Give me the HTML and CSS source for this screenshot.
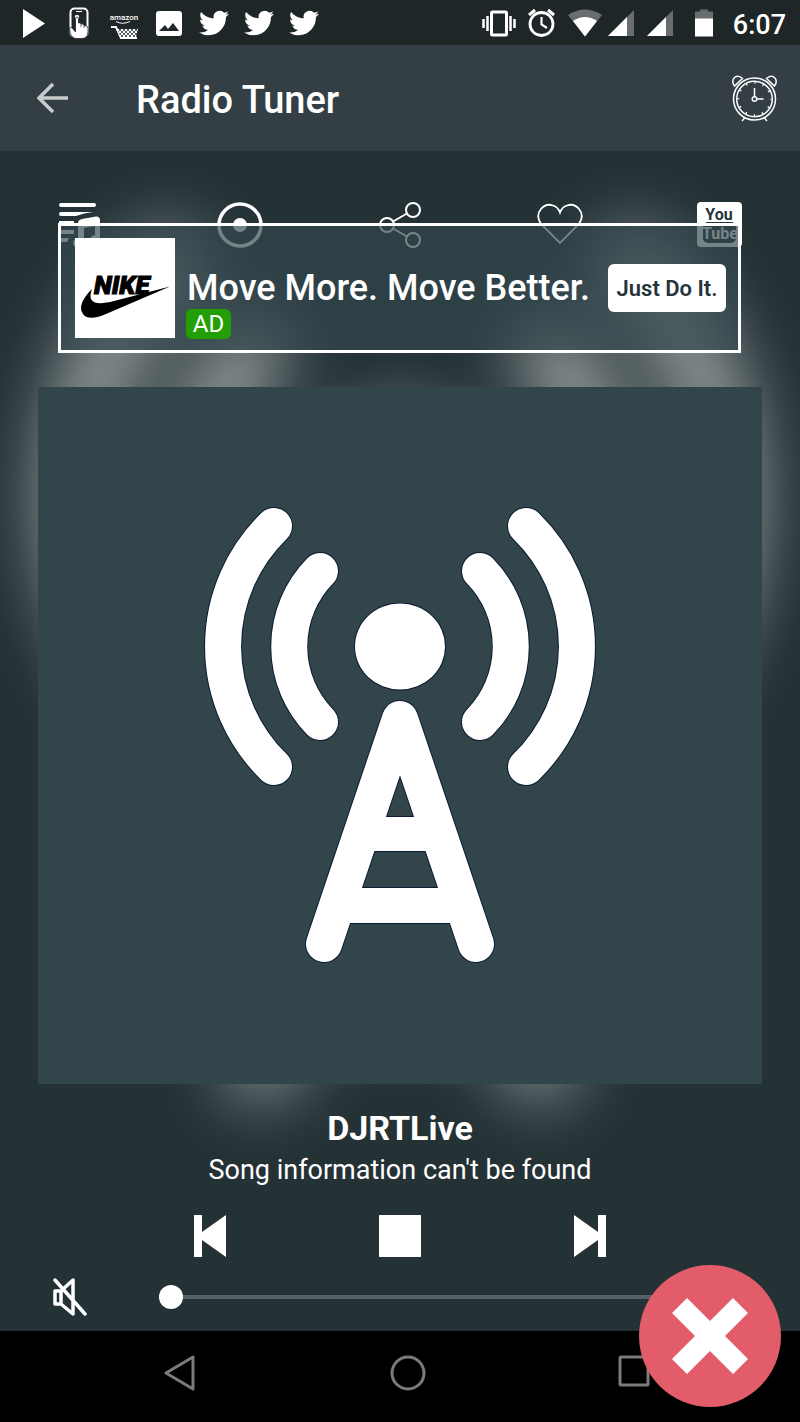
FILE: index.html
```html
<!DOCTYPE html>
<html lang="en">
<head>
<meta charset="utf-8">
<meta name="viewport" content="width=device-width, initial-scale=1">
<title>Radio Tuner</title>
<link rel="stylesheet" href="styles.css">
</head>
<body>
<svg class="defs" aria-hidden="true">
  <defs>
    <g id="waves">
      <path d="M236 139A168 168 0 0 0 236 380M282 184A108 108 0 0 0 282 335M488 139A168 168 0 0 1 488 380M442 184A108 108 0 0 1 442 335"/>
      <path d="M286 557L362 332L438 557"/>
    </g>
    <g id="mast">
      <ellipse cx="362" cy="259.500" rx="45" ry="43"/>
      <path d="M331 430H393L405 464H319ZM308 501H416L428 536H296Z"/>
    </g>
    <path id="bird" d="M23.953 4.57a10 10 0 01-2.825.775 4.958 4.958 0 002.163-2.723c-.951.555-2.005.959-3.127 1.184a4.92 4.92 0 00-8.384 4.482C7.69 8.095 4.067 6.13 1.64 3.162a4.822 4.822 0 00-.666 2.475c0 1.71.87 3.213 2.188 4.096a4.904 4.904 0 01-2.228-.616v.06a4.923 4.923 0 003.946 4.827 4.996 4.996 0 01-2.212.085 4.936 4.936 0 004.604 3.417 9.867 9.867 0 01-6.102 2.105c-.39 0-.779-.023-1.17-.067a13.995 13.995 0 007.557 2.209c9.053 0 13.998-7.496 13.998-13.985 0-.21 0-.42-.015-.63A9.935 9.935 0 0024 4.59z"/>
    <pattern id="mesh" width="4" height="4" patternUnits="userSpaceOnUse">
      <rect width="4" height="4" fill="#fff"/><circle cx="1" cy="1" r="1" fill="#1f2628"/><circle cx="3" cy="3" r="1" fill="#1f2628"/>
    </pattern>
  </defs>
</svg>

<div class="phone">
  <div class="app">
    <div class="backdrop" aria-hidden="true">
      <svg class="glow" viewBox="0 0 724 697" preserveAspectRatio="none">
        <use href="#waves" class="wave-fill"/><use href="#mast" class="mast-fill"/>
      </svg>
    </div>

    <div class="status">
      <div class="status-left">
        <svg viewBox="0 0 30 32"><path d="M4 2V31L26 16.500Z"/></svg>
        <svg viewBox="0 0 30 32"><rect x="6.500" y="1.500" width="17" height="28" rx="4" fill="none" stroke="#fff" stroke-width="2"/><path d="M12 4.500H18" stroke="#fff"/><circle cx="13" cy="10" r="2.200"/><path d="M11.500 12Q11.500 10 13 10T14.500 12V16Q16.500 15 17 17Q19.500 16 20 18.500Q23.500 18 24 21V25Q23.500 31.500 18 31.500H12Q6 31 5.500 21Q8 19.500 9 22L11.500 25Z" stroke="#1f2628" stroke-width=".8"/><path d="M17 17V20M20 18.500V21" stroke="#1f2628" stroke-width=".7"/></svg>
        <svg viewBox="0 0 30 32"><text x="15" y="13" class="amazon">amazon</text><path d="M7 14.500Q13 18 21 14.500" fill="none" stroke="#fff"/><path d="M2 20H7L12 31H28" fill="none" stroke="#fff" stroke-width="2"/><path d="M8 22H29L27 30H12Z" fill="url(#mesh)"/></svg>
        <svg viewBox="0 0 30 32"><path fill-rule="evenodd" d="M5 4H25Q28 4 28 7V26Q28 29 25 29H5Q2 29 2 26V7Q2 4 5 4ZM5 24H25L19 16L14 22L11 18Z"/></svg>
        <svg viewBox="0 0 24 24"><use href="#bird"/></svg>
        <svg viewBox="0 0 24 24"><use href="#bird"/></svg>
        <svg viewBox="0 0 24 24"><use href="#bird"/></svg>
      </div>
      <div class="status-right">
        <svg width="34" height="32" viewBox="0 0 34 32"><rect x="9.500" y="5" width="15" height="23" rx="1" fill="none" stroke="#fff" stroke-width="3"/><path d="M1.500 12V21M5.500 9V24M28.500 9V24M32.500 12V21" stroke="#fff" stroke-width="2.500"/></svg>
        <svg width="40" height="32" viewBox="0 0 40 32"><g fill="none" stroke="#fff"><circle cx="19.500" cy="17" r="11.500" stroke-width="2.800"/><path d="M19.500 10V17.500L25 21" stroke-width="2.200"/><path d="M7 8L13 3M32 8L26 3" stroke-width="3"/></g></svg>
        <svg width="34" height="32" viewBox="0 0 34 32"><path d="M0 8Q17 -3 34 8L17 29.500Z" opacity=".33"/><path d="M5 14Q17 6 29 14L17 29.500Z"/></svg>
        <svg width="65" height="32" viewBox="0 0 65 32"><path d="M0 29L26 3V29ZM39 29L65 3V29Z" opacity=".33"/><path d="M0 29L19 10V29ZM39 29L58 10V29Z"/></svg>
        <svg width="48" height="32" viewBox="0 0 48 32"><path d="M16 4.500H21V2.500H29V4.500H34V12H16Z" opacity=".33"/><path d="M16 11.500H34V29.500H16Z"/></svg>
        <time class="clock">6:07</time>
      </div>
    </div>

    <header class="header">
      <button class="plain" aria-label="Back"><svg width="32" height="32" viewBox="0 0 32 32"><path d="M31 16H3M16 2L2 16L16 30" fill="none" stroke="#c9cccd" stroke-width="3.500"/></svg></button>
      <h1 class="title">Radio Tuner</h1>
      <button class="plain" aria-label="Sleep timer">
        <svg class="line" width="48" height="48" viewBox="0 0 48 48" stroke-width="1.500">
          <circle cx="24.500" cy="25" r="21"/><circle cx="24.500" cy="25" r="17.800"/>
          <circle cx="24.500" cy="25" r="16.500" stroke-width="2.500" stroke-dasharray="1.300 7.339" stroke-dashoffset=".65"/>
          <circle cx="24.500" cy="25" r="2.300"/><path d="M24.500 22.500V14M27 25H33.500M15 43.500L12 47M34 43.500L37 47"/>
          <path d="M4.500 12Q1 7 4.500 3.500Q8.500 .5 12.500 4.500ZM44.500 12Q48 7 44.500 3.500Q40.500 .5 36.500 4.500Z"/>
        </svg>
      </button>
    </header>

    <main class="player">
      <nav class="toolbar" aria-label="Station actions">
        <button class="plain" aria-label="Playlist"><svg width="48" height="48" viewBox="0 0 48 48"><g fill="none" stroke="#fff" stroke-width="4" stroke-linecap="round"><path d="M5 4H38"/><path d="M5 13H18"/></g><path d="M5 11H37Q28 12 20 15H5ZM3 20H18V24H3ZM3 29H18V33H3ZM3 37H13L11 41H3Z"/><path d="M22 22Q22 19 26 18L40 15.500Q44 15.500 44 19V38Q44 44 38 44Q34 43 34 39Q34 35 39 34V25L28 27V42Q27 47 22 47Q17 46 17 42Q17 38 22 37Z"/></svg></button>
        <button class="plain" aria-label="Record"><svg width="48" height="48" viewBox="0 0 48 48"><circle cx="24" cy="24" r="21" fill="none" stroke="#fff" stroke-width="3.500"/><circle cx="24" cy="24" r="7"/></svg></button>
        <button class="plain" aria-label="Share"><svg class="line" width="48" height="48" viewBox="0 0 48 48" stroke-width="2"><circle cx="11" cy="24" r="7"/><circle cx="37" cy="9" r="7"/><circle cx="37" cy="39" r="7"/><path d="M17 20.500L31 12.500M17 27.500L31 35.500"/></svg></button>
        <button class="plain" aria-label="Favourite"><svg width="48" height="48" viewBox="0 0 48 48"><path d="M24 42L6 24Q-1 15 5 8Q10 2 17 4.500Q22 6 24 11.500Q26 6 31 4.500Q38 2 43 8Q49 15 42 24Z" fill="none" stroke="#fff" stroke-width="1.800"/></svg></button>
        <button class="plain" aria-label="YouTube"><svg width="48" height="48" viewBox="0 0 48 48"><rect x="1" y="1" width="45" height="45" rx="4"/><rect x="7" y="21" width="33" height="21" rx="5" fill="#26353a"/><text x="23" y="19" class="yt yt-dark">You</text><text x="24" y="38" class="yt">Tube</text></svg></button>
      </nav>

      <aside class="ad" aria-label="Advertisement">
        <svg class="ad-logo" width="100" height="100" viewBox="0 0 100 100" role="img" aria-label="Nike"><rect width="100" height="100"/><g fill="#000"><path d="M17 51C8 60 3 69 8 76C12 82 22 80 31 76L95 48.500L39 63C24 67 11 67 17 51Z"/><text x="19" y="56" class="nike">NIKE</text></g></svg>
        <div class="ad-copy">
          <p class="ad-text">Move More. Move Better.</p>
          <span class="ad-badge">AD</span>
        </div>
        <button class="ad-button">Just Do It.</button>
      </aside>

      <div class="artwork">
        <svg viewBox="0 0 724 697" role="img" aria-label="Radio tower">
          <use href="#waves" class="wave-edge"/><use href="#mast" class="mast-edge"/>
          <use href="#waves" class="wave-fill"/><use href="#mast" class="mast-fill"/>
        </svg>
      </div>

      <h2 class="station">DJRTLive</h2>
      <p class="song">Song information can't be found</p>

      <div class="controls">
        <button class="plain" aria-label="Previous"><svg width="32" height="42" viewBox="0 0 32 42"><path d="M0 0H8V17L32 0V42L8 25V42H0Z"/></svg></button>
        <button class="plain" aria-label="Stop"><svg width="42" height="42" viewBox="0 0 42 42"><path d="M0 0H42V42H0Z"/></svg></button>
        <button class="plain" aria-label="Next"><svg width="32" height="42" viewBox="0 0 32 42"><path d="M32 0H24V17L0 0V42L24 25V42H32Z"/></svg></button>
      </div>

      <div class="volume">
        <button class="plain" aria-label="Mute"><svg width="34" height="38" viewBox="0 0 34 38"><path d="M2 13H8V26H2ZM8 13L20 2V36L8 26M2 2L32 36" fill="none" stroke="#fff" stroke-width="3.500" stroke-linejoin="round" stroke-linecap="round"/></svg></button>
        <input class="slider" type="range" min="0" max="100" value="0" aria-label="Volume">
      </div>
    </main>
  </div>

  <nav class="system" aria-label="System navigation">
    <button class="plain" aria-label="System back"><svg width="36" height="36" viewBox="0 0 36 36"><path d="M31 2V34L4 18Z"/></svg></button>
    <button class="plain" aria-label="Home"><svg width="36" height="36" viewBox="0 0 36 36"><circle cx="18" cy="18" r="16"/></svg></button>
    <button class="plain" aria-label="Recent apps"><svg width="36" height="36" viewBox="0 0 36 36"><rect x="2" y="2" width="28" height="28" rx="1"/></svg></button>
  </nav>

  <button class="close" aria-label="Close"><svg width="76" height="76" viewBox="0 0 76 76"><path d="M15 0L38 23L61 0L76 15L53 38L76 61L61 76L38 53L15 76L0 61L23 38L0 15Z"/></svg></button>
</div>
</body>
</html>
```
FILE: styles.css
```css
* { box-sizing: border-box; margin: 0; }
body { background: #000; color: #fff; font-family: Roboto, "Liberation Sans", sans-serif; }
svg { display: block; fill: #fff; flex: none; }
.line { fill: none; stroke: #fff; }
.defs { position: absolute; width: 0; height: 0; }
.plain { display: grid; place-items: center; padding: 0; border: 0; background: none; color: inherit; cursor: pointer; }

.phone { position: relative; min-height: 100vh; display: flex; flex-direction: column; }
.app { position: relative; background: #243236; }

.backdrop { position: absolute; inset: 0; overflow: hidden; display: flex; justify-content: center; }
.glow { height: 100%; aspect-ratio: 1; filter: blur(34px); opacity: 0.56; overflow: visible; }

.wave-edge, .wave-fill { fill: none; stroke-linecap: round; stroke-linejoin: round; }
.wave-edge { stroke: #0d1c35; stroke-width: 38px; }
.wave-fill { stroke: #fff; stroke-width: 36px; }
.mast-edge { fill: #0d1c35; stroke: #0d1c35; stroke-width: 2px; }
.mast-fill { fill: #fff; }

.status { position: relative; display: flex; justify-content: space-between; align-items: center; height: 45px; padding: 0 14px 0 19px; background: #1f2628; }
.status-left { display: flex; align-items: center; gap: 15px; }
.status-left svg { width: 30px; height: 32px; }
.status-right { display: flex; align-items: center; gap: 6px; }
.clock { padding-top: 4px; font-size: 27px; font-weight: 500; line-height: 40px; }
.amazon { font: 500 8px Roboto, sans-serif; text-anchor: middle; }

.header { position: relative; display: flex; align-items: center; height: 106px; padding: 0 22px 0 37px; background: #333f44; }
.title { flex: 1; padding: 4px 0 0 67px; font-size: 38px; font-weight: 500; line-height: 48px; }

.player { position: relative; padding-bottom: 15px; }
.toolbar { display: grid; grid-template-columns: repeat(5, 1fr); padding-top: 50px; margin-bottom: 138px; }

.ad { position: absolute; top: 72px; left: 58px; right: 59px; display: flex; align-items: flex-start; height: 130px; padding: 12px 12px 12px 14px; border: 3px solid #fff; background: rgba(51, 72, 78, 0.67); }
.ad-copy { flex: 1; padding: 30px 0 0 11px; }
.ad-text { padding-left: 1px; font-size: 36px; font-weight: 500; line-height: 41px; white-space: nowrap; }
.ad-badge { display: block; width: 45px; border-radius: 6px; background: #229f05; font-size: 24px; line-height: 30px; text-align: center; }
.ad-button { width: 118px; height: 48px; margin-top: 26px; padding: 0; border: 0; border-radius: 6px; background: #fff; color: #26353a; font: 600 22px Roboto, sans-serif; white-space: nowrap; }
.nike { font: italic 900 26px Roboto, sans-serif; stroke: #000; }
.yt { font: 700 16px Roboto, sans-serif; text-anchor: middle; }
.yt-dark { fill: #26353a; }

.artwork { margin: 0 38px; background: #32454a; }
.artwork svg { width: 100%; height: auto; }

.station { margin-top: 22px; font-size: 34px; font-weight: 700; line-height: 44px; text-align: center; }
.song { font-size: 27px; line-height: 40px; text-align: center; }

.controls { display: grid; grid-template-columns: repeat(3, 1fr); padding: 0 115px; margin-top: 25px; }
.volume { display: flex; align-items: center; gap: 72px; margin-top: 21px; padding: 0 54px 0 53px; }
.slider { flex: 1; min-width: 0; height: 24px; margin: 0; appearance: none; background: transparent; }
.slider::-webkit-slider-runnable-track { height: 4px; background: #566164; }
.slider::-webkit-slider-thumb { appearance: none; width: 24px; height: 24px; margin-top: -10px; border-radius: 50%; background: #fff; }

.system { flex: 1; display: grid; grid-template-columns: repeat(3, 1fr); min-height: 91px; padding: 0 50px 8px 66px; background: #000; }
.system svg { fill: none; stroke: #7b7b7b; stroke-width: 3px; stroke-linejoin: round; }

.close { position: absolute; right: 19px; bottom: 15px; display: grid; place-items: center; width: 142px; height: 142px; padding: 0; border: 0; border-radius: 50%; background: #e25c69; cursor: pointer; }
```
